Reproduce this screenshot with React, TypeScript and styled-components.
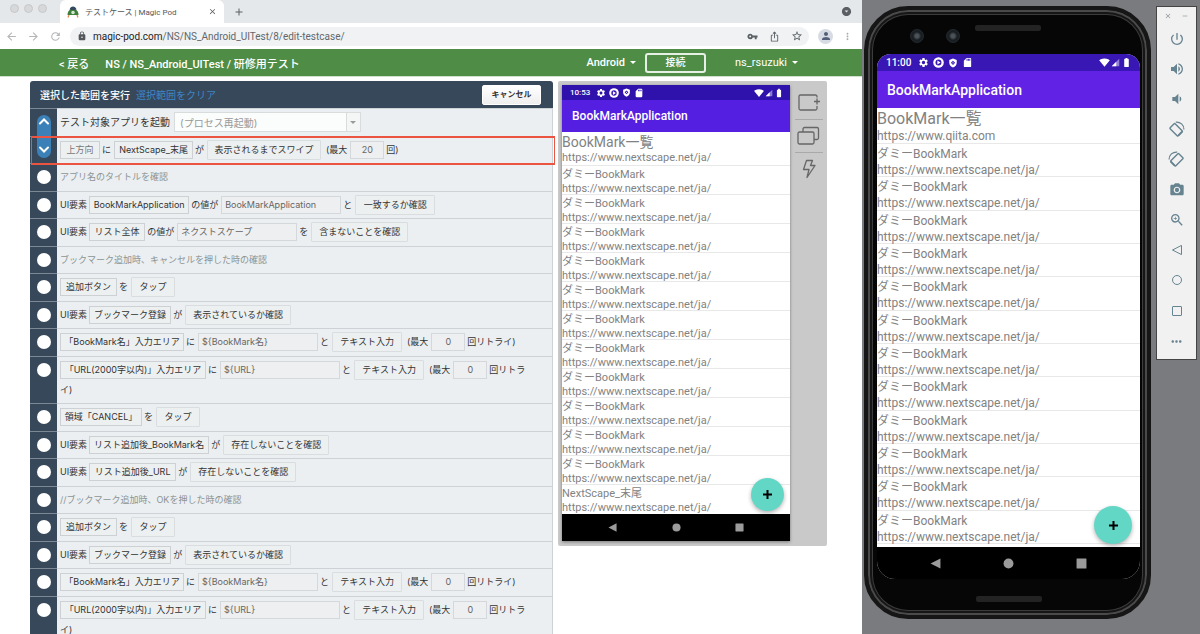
import React from "react";
import styled, { createGlobalStyle, css } from "styled-components";
import {
  MdAdd,
  MdArrowBack,
  MdArrowForward,
  MdArrowDropDownCircle,
  MdBatteryFull,
  MdClose,
  MdIosShare,
  MdLock,
  MdMoreHoriz,
  MdMoreVert,
  MdPerson,
  MdPhotoCamera,
  MdPowerSettingsNew,
  MdRefresh,
  MdRemove,
  MdSdCard,
  MdSettings,
  MdSignalWifi4Bar,
  MdStarBorder,
  MdVolumeDown,
  MdVolumeUp,
  MdVpnKey,
  MdZoomIn,
} from "react-icons/md";

const GlobalStyle = createGlobalStyle`
  *, *::before, *::after { box-sizing: border-box; }
  body {
    margin: 0;
    font-family: Inter, "Noto Sans CJK JP", sans-serif;
    color: #333;
    background: #fff;
  }
  button, input, select { font: inherit; color: inherit; margin: 0; }
  button { cursor: pointer; }
  svg { display: block; flex: none; }
`;

const Desktop = styled.div`
  display: flex;
  height: 100vh;
  overflow: hidden;
`;

const Browser = styled.div`
  flex: 1;
  min-width: 0;
  background: #fff;
`;

/* ---------- browser chrome ---------- */

const TabStrip = styled.div`
  display: flex;
  align-items: center;
  height: 23px;
  padding: 0 10px;
  background: #e4e8eb;
`;

const Lights = styled.div`
  display: flex;
  gap: 5px;
  align-self: flex-start;
  padding-top: 4px;
  width: 50px;
`;

const Light = styled.span`
  width: 9px;
  height: 9px;
  border-radius: 50%;
  background: #d7d8d9;
  border: 1px solid #c6c8c9;
`;

const Tab = styled.div`
  display: flex;
  align-items: center;
  gap: 6px;
  width: 164px;
  height: 23px;
  padding: 0 7px;
  border-radius: 6px 6px 0 0;
  background: #fff;
  font-size: 8px;
  color: #54585c;
`;

const TabTitle = styled.span`
  flex: 1;
  white-space: nowrap;
  font-family: Roboto, "Noto Sans CJK JP", sans-serif;
`;

const IconButton = styled.button<{ $color?: string }>`
  display: flex;
  align-items: center;
  justify-content: center;
  padding: 0;
  border: 0;
  background: none;
  color: ${(p) => p.$color ?? "#5b5f63"};
`;

const StripButton = styled(IconButton)`
  margin-left: 9px;
`;

const StripEnd = styled(IconButton)`
  margin-left: auto;
`;

const AddressRow = styled.div`
  display: flex;
  align-items: center;
  height: 26px;
  padding: 0 9px 0 5px;
  gap: 9px;
`;

const AddressBar = styled.div`
  flex: 1;
  display: flex;
  align-items: center;
  height: 19px;
  margin-left: -1px;
  padding: 0 6px 0 7px;
  border-radius: 10px;
  background: #f0f2f4;
`;

const Address = styled.span`
  flex: 1;
  margin-left: 6px;
  font-family: Roboto, sans-serif;
  font-size: 10px;
  color: #63676b;
  white-space: nowrap;
`;

const Host = styled.span`
  color: #1f2225;
`;

const AddressIcons = styled.div`
  display: flex;
  gap: 11px;
`;

const Avatar = styled(IconButton)`
  width: 15px;
  height: 15px;
  border-radius: 50%;
  background: #d7dbe3;
`;

/* ---------- application header ---------- */

const Header = styled.header`
  display: flex;
  align-items: center;
  height: 28px;
  padding: 0 64px 0 59px;
  border-bottom: 1px solid #cfe0cc;
  background: #4f8d46;
  color: #fff;
  font-family: Roboto, "Noto Sans CJK JP", sans-serif;
  font-size: 11px;
  font-weight: 500;
  white-space: nowrap;
`;

const HeaderLink = styled.a`
  margin-right: 16px;
  color: inherit;
  text-decoration: none;
`;

const Crumbs = styled.span`
  flex: 1;
`;

const HeaderMenu = styled.button<{ $light?: boolean }>`
  display: flex;
  align-items: center;
  gap: 5px;
  padding: 0;
  border: 0;
  background: none;
  font-weight: ${(p) => (p.$light ? 400 : 500)};

  &::after {
    content: "";
    border: 3px solid transparent;
    border-top-color: #fff;
    border-bottom: 0;
  }
`;

const ConnectButton = styled.button`
  width: 61px;
  height: 20px;
  margin: 0 29px 0 9px;
  padding: 0;
  border: 2px solid #e6f0e4;
  border-radius: 3px;
  background: none;
  font-size: 10px;
  line-height: 15px;
`;

/* ---------- test steps ---------- */

const Workspace = styled.main`
  display: flex;
  align-items: flex-start;
  gap: 5px;
  padding: 4px 35px 0 30px;
`;

const Steps = styled.section`
  flex: 1;
  min-width: 0;
  border-radius: 3px 3px 0 0;
  background: #37485a;
  font-size: 9px;
`;

const StepsHeader = styled.div`
  display: flex;
  align-items: center;
  gap: 6px;
  height: 27px;
  padding: 0 12px 0 10px;
  color: #fff;
  font-size: 10px;
  font-weight: 500;
`;

const ClearLink = styled.a`
  color: #3d86c6;
  text-decoration: none;
  font-weight: 400;
`;

const CancelButton = styled.button`
  width: 59px;
  height: 20px;
  margin-left: auto;
  padding: 0;
  border: 1px solid #fff;
  border-radius: 2px;
  background: linear-gradient(#fff, #eee);
  color: #333;
  font-size: 8px;
  font-weight: 700;
  line-height: 17px;
`;

const StepList = styled.ul`
  position: relative;
  margin: 0;
  padding: 0;
  list-style: none;
`;

const StepRow = styled.li<{ $framed?: boolean }>`
  display: flex;
  min-height: 28px;
  border-top: 1px solid #7c8894;

  &:nth-child(even) {
    min-height: 27px;
  }

  ${(p) =>
    p.$framed &&
    css`
      position: relative;
      &::after {
        content: "";
        position: absolute;
        inset: -1px -2px -2px 1px;
        border: 2px solid #ea5440;
        border-width: 2px 1px;
        pointer-events: none;
        z-index: 2;
      }
    `}
`;

const Gutter = styled.div`
  flex: none;
  width: 27px;
  padding: 6px 0 0 7px;
`;

const Marker = styled.button`
  display: block;
  width: 14px;
  height: 14px;
  padding: 0;
  border: 0;
  border-radius: 50%;
  background: #fff;
`;

const RangeHandle = styled.li`
  position: absolute;
  top: 7px;
  left: 7px;
  z-index: 1;
  display: flex;
  flex-direction: column;
  justify-content: space-between;
  align-items: center;
  width: 14px;
  height: 43px;
  padding: 3px 0 5px;
  border-radius: 7px;
  background: #3c80b8;
`;

const StepBody = styled.div<{ $muted?: boolean }>`
  flex: 1;
  min-width: 0;
  margin-top: -1px;
  padding: 2px 20px 3px 3px;
  border-top: 1px solid #ccd2d5;
  border-right: 1px solid #ccd2d5;
  background: #ebeff1;
  color: ${(p) => (p.$muted ? "#8b9494" : "#333")};
  line-height: 20px;
`;

const Word = styled.span<{ $first?: boolean; $large?: boolean }>`
  padding: ${(p) => (p.$first ? "0 2px 0 0" : "0 3px 0 2px")};
  font-size: ${(p) => (p.$large ? 10 : 9)}px;
  vertical-align: middle;
`;

const boxed = css<{ $w: number; $muted?: boolean }>`
  width: ${(p) => p.$w}px;
  padding: 0;
  border: 1px solid #cdd1d3;
  white-space: nowrap;
  vertical-align: middle;
  color: ${(p) => (p.$muted ? "#777" : "#333")};
`;

const Target = styled.button`
  ${boxed}
  height: 18px;
  background: #edf0f1;
  line-height: 14px;
`;

const Action = styled.button`
  ${boxed}
  height: 20px;
  margin: 0 3px 0 0;
  border-color: #d9dddf;
  border-radius: 1px;
  background: #edf0f1;
  line-height: 16px;
`;

const Field = styled.input<{ $w: number; $center?: boolean }>`
  ${boxed}
  height: 18px;
  padding: 0 3px;
  border-color: #d5d8da;
  background: #eeeff0;
  color: #666;
  text-align: ${(p) => (p.$center ? "center" : "left")};
`;

const SelectWrap = styled.span`
  position: relative;
  display: inline-block;
  margin-left: 2px;
  vertical-align: middle;

  &::after {
    content: "";
    position: absolute;
    top: 9px;
    right: 5px;
    border: 3px solid transparent;
    border-top-color: #999;
    border-bottom: 0;
    pointer-events: none;
  }
`;

const ModeSelect = styled.select`
  display: block;
  appearance: none;
  width: 187px;
  height: 20px;
  padding: 0 18px 0 5px;
  border: 1px solid #d9dcdd;
  border-radius: 0;
  background: linear-gradient(90deg, #fbfcfc 171px, #d9dcdd 171px, #d9dcdd 172px, #f4f6f6 172px);
  color: #999;
  font-size: 10px;
`;

/* ---------- device mirror ---------- */

const Mirror = styled.aside`
  flex: none;
  display: flex;
  width: 269px;
  padding: 4px 0 5px 4px;
  border-radius: 2px;
  background: #c9c9c9;
`;

const Tools = styled.div`
  flex: 1;
  display: flex;
  flex-direction: column;
  align-items: center;
  padding: 2px 4px 0;
`;

const Tool = styled.button`
  display: flex;
  justify-content: center;
  align-items: center;
  width: 28px;
  height: 33px;
  padding: 0;
  border: 0;
  border-bottom: 1px solid #a9a9a9;
  background: none;
  color: #666;

  &:last-child {
    border-bottom-color: transparent;
  }
`;

const Screen = styled.div<{ $large?: boolean }>`
  position: relative;
  display: flex;
  flex-direction: column;
  width: ${(p) => (p.$large ? 263 : 228)}px;
  border-radius: ${(p) => (p.$large ? "14px 14px 18px 18px" : "0")};
  overflow: hidden;
  background: #fff;
  font-family: Roboto, "Noto Sans CJK JP", sans-serif;
  ${(p) => !p.$large && "box-shadow: 0 1px 3px rgba(0, 0, 0, 0.4);"}
`;

const StatusBar = styled.div<{ $large?: boolean }>`
  display: flex;
  align-items: center;
  gap: ${(p) => (p.$large ? 4 : 3)}px;
  height: ${(p) => (p.$large ? 17 : 15)}px;
  padding: 0 ${(p) => (p.$large ? 8 : 6)}px 0 ${(p) => (p.$large ? 9 : 8)}px;
  background: ${(p) => (p.$large ? "#3917b4" : "#2e12ab")};
  color: #fff;
  font-size: ${(p) => (p.$large ? 10 : 8)}px;
  font-weight: 500;
`;

const Clock = styled.span`
  margin-right: 3px;
`;

const StatusRight = styled.span`
  display: flex;
  align-items: center;
  gap: 1px;
  margin-left: auto;
`;

const AppTitle = styled.div<{ $large?: boolean }>`
  display: flex;
  align-items: center;
  height: ${(p) => (p.$large ? 37 : 32)}px;
  padding: 0 10px;
  background: ${(p) => (p.$large ? "#6122e6" : "#541fe0")};
  color: #fff;
  font-size: ${(p) => (p.$large ? 14 : 12)}px;
  font-weight: 500;
`;

const Bookmarks = styled.ul<{ $large?: boolean }>`
  margin: 0;
  padding: 0 0 ${(p) => (p.$large ? 3 : 0)}px;
  list-style: none;
  color: #828282;
  font-size: ${(p) => (p.$large ? 12 : 11)}px;
  white-space: nowrap;
`;

const Bookmark = styled.li<{ $large?: boolean; $lead?: boolean }>`
  display: flex;
  flex-direction: column;
  padding-top: 2px;
  height: ${(p) => (p.$large ? (p.$lead ? 36 : 33) : p.$lead ? 34 : 29)}px;
  border-bottom: 1px solid #e8e8e8;
  line-height: ${(p) => (p.$large ? 16 : 14)}px;

  &:last-child {
    border-bottom-color: ${(p) => (p.$large ? "#e8e8e8" : "transparent")};
  }

  ${(p) =>
    p.$large &&
    css`
      &:nth-child(3n) {
        height: 34px;
      }
    `}
`;

const BookmarkName = styled.span<{ $lead?: boolean; $large?: boolean }>`
  ${(p) =>
    p.$lead &&
    css`
      font-size: ${p.$large ? 16 : 14}px;
      line-height: ${p.$large ? 18 : 17}px;
    `}
`;

const Fab = styled.button<{ $large?: boolean }>`
  position: absolute;
  right: ${(p) => (p.$large ? 8 : 6)}px;
  bottom: ${(p) => (p.$large ? 35 : 30)}px;
  display: flex;
  align-items: center;
  justify-content: center;
  width: ${(p) => (p.$large ? 38 : 33)}px;
  height: ${(p) => (p.$large ? 38 : 33)}px;
  padding: 0;
  border: 0;
  border-radius: 50%;
  background: #62d7c6;
  color: #000;
  box-shadow: 0 2px 4px rgba(0, 0, 0, 0.3);
`;

const NavBar = styled.div<{ $large?: boolean }>`
  position: relative;
  display: flex;
  justify-content: space-between;
  align-items: center;
  height: ${(p) => (p.$large ? 32 : 27)}px;
  padding: 0 ${(p) => (p.$large ? 53 : 46)}px;
  background: #000;
  color: #9b9b9b;
`;

/* ---------- emulator ---------- */

const Emulator = styled.aside`
  flex: none;
  display: flex;
  align-items: flex-start;
  gap: 5px;
  padding: 6px 3px 0 2px;
  background: #7a7b7f;
`;

const PhoneBody = styled.div`
  display: flex;
  flex-direction: column;
  align-items: center;
  width: 287px;
  height: 613px;
  padding: 0 0 13px 2px;
  border: 4px solid #161616;
  border-radius: 44px;
  background: #060606;
  box-shadow: inset 0 0 0 2px #4a4a4a, inset 0 0 0 4px #161616, inset 0 0 0 5px #3c3c3c;
`;

const PhoneTop = styled.div`
  display: flex;
  align-items: flex-start;
  width: 100%;
  height: 44px;
  padding: 15px 0 0 40px;
  gap: 22px;
`;

const Lens = styled.span`
  width: 14px;
  height: 14px;
  margin-top: 4px;
  border-radius: 50%;
  border: 1px solid #22282d;
  background: radial-gradient(circle, #4b5258 20%, #171c20 50%, #22282d);
`;

const Speaker = styled.span<{ $bottom?: boolean }>`
  flex: none;
  width: 66px;
  height: 6px;
  border-radius: 2px;
  background: #232323;
  margin: ${(p) => (p.$bottom ? "17px 0 0" : "0 0 0 -7px")};
`;

const Panel = styled.div`
  display: flex;
  flex-direction: column;
  align-items: center;
  width: 41px;
  height: 354px;
  border: 1px solid #444;
  background: #f1f1f1;
  color: #668390;
`;

const PanelTop = styled.div`
  display: flex;
  gap: 9px;
  height: 17px;
  align-items: center;
`;

const PanelButtons = styled.div`
  flex: 1;
  display: flex;
  flex-direction: column;
`;

const PanelButton = styled(IconButton)`
  width: 39px;
  height: 30px;
  color: inherit;

  &:nth-child(5n) {
    height: 31px;
  }
`;

/* ---------- drawings ---------- */

const PodLogo = () => (
  <svg width="12" height="12" viewBox="0 0 24 24">
    <path d="M1 18C1 10 6 6 12 6s11 4 11 12z" fill="#3f7f3b" />
    <path d="M5 7c1-4 4-6 7-6s6 2 7 6l-3 1H8z" fill="#314a5c" />
    <circle cx="12" cy="13" r="3.500" fill="#d6e8d2" />
    <path d="M4 18l-2 5M20 18l2 5" stroke="#e58a52" strokeWidth="2.500" />
  </svg>
);

const Chevron = ({ down }: { down?: boolean }) => (
  <svg width="10" height="7" viewBox="0 0 10 7" fill="none" stroke="#fff" strokeWidth="2" strokeLinecap="round">
    <path d={down ? "M1 1.5l4 4 4-4" : "M1 5.5l4-4 4 4"} />
  </svg>
);

const AddScreenIcon = () => (
  <svg width="24" height="20" viewBox="0 0 24 20" fill="none" stroke="currentColor" strokeWidth="1.3">
    <path d="M20 4.500V3.500a1.500 1.500 0 0 0-1.500-1.500H3.500A1.500 1.500 0 0 0 2 3.500v12A1.500 1.500 0 0 0 3.500 17h15a1.500 1.500 0 0 0 1.500-1.500V13M20 5.500v6M17 8.500h6" />
  </svg>
);

const StackIcon = () => (
  <svg width="24" height="22" viewBox="0 0 24 22" fill="none" stroke="currentColor" strokeWidth="1.300">
    <rect x="1" y="7" width="16" height="12" rx="1.500" />
    <path d="M6 7V4a1.500 1.500 0 0 1 1.500-1.500H20A1.500 1.500 0 0 1 21.500 4v9a1.500 1.500 0 0 1-1.500 1.500h-3" />
  </svg>
);

const BoltIcon = () => (
  <svg width="16" height="20" viewBox="0 0 16 20" fill="none" stroke="currentColor" strokeWidth="1.300" strokeLinejoin="round">
    <path d="M5.500 1.500h6l-2 5h4.500L6 18.500l2-8H2.500z" />
  </svg>
);

const PlayBadge = ({ size }: { size: number }) => (
  <svg width={size} height={size} viewBox="0 0 24 24">
    <circle cx="12" cy="12" r="11.500" fill="#fff" />
    <circle cx="12" cy="12" r="6.500" fill="#3917b4" />
    <path d="M9.500 7.500v9l7-4.500z" fill="#fff" />
  </svg>
);

const ShieldBadge = ({ size }: { size: number }) => (
  <svg width={size} height={size} viewBox="0 0 24 24">
    <path d="M12 1L3 4.500V11c0 5.500 3.800 10.500 9 12 5.200-1.500 9-6.500 9-12V4.500z" fill="#fff" />
    <path d="M12 6.500l5 5-5 5-5-5z" fill="#3917b4" />
    <circle cx="12" cy="11.500" r="1.500" fill="#fff" />
  </svg>
);

const SignalIcon = ({ size }: { size: number }) => (
  <svg width={size} height={size} viewBox="0 0 24 24">
    <path d="M2 22L22 2v20z" fill="#fff" opacity="0.450" />
    <path d="M2 22L14 10v12z" fill="#fff" />
  </svg>
);

const RotateIcon = ({ mirrored }: { mirrored?: boolean }) => (
  <svg width="17" height="17" viewBox="0 0 24 24" fill="none" stroke="currentColor">
    <g transform={mirrored ? "translate(24 0) scale(-1 1)" : undefined}>
      <rect x="3.500" y="7.500" width="16" height="10" rx="1" strokeWidth="2" transform="rotate(45 11.500 12.500)" />
      <path d="M13.500 19.500l5.500-5.500" strokeWidth="2.500" transform="translate(1 1)" />
      <path d="M11 1.500c6.500-.5 11.500 4 11.500 10.500" strokeWidth="1.700" />
    </g>
  </svg>
);

const BackShape = ({ size, outline }: { size: number; outline?: boolean }) => (
  <svg width={size} height={size} viewBox="0 0 10 10" fill={outline ? "none" : "currentColor"} stroke={outline ? "currentColor" : "none"}>
    <path d="M9.500 .4v9.200L.5 5z" />
  </svg>
);

const HomeShape = ({ size, outline }: { size: number; outline?: boolean }) => (
  <svg width={size} height={size} viewBox="0 0 10 10" fill={outline ? "none" : "currentColor"} stroke={outline ? "currentColor" : "none"}>
    <circle cx="5" cy="5" r="4.500" />
  </svg>
);

const RecentShape = ({ size, outline }: { size: number; outline?: boolean }) => (
  <svg width={size} height={size} viewBox="0 0 10 10" fill={outline ? "none" : "currentColor"} stroke={outline ? "currentColor" : "none"}>
    <rect x=".5" y=".5" width="9" height="9" rx=".5" />
  </svg>
);

/* ---------- step data ---------- */

type Part =
  | { kind: "text"; text: string; large?: boolean }
  | { kind: "target"; text: string; w: number; muted?: boolean }
  | { kind: "action"; text: string; w: number }
  | { kind: "field"; text: string; w: number; center?: boolean }
  | { kind: "mode" };

type Step = { parts: Part[]; comment?: boolean; framed?: boolean; inRange?: boolean };

const text = (value: string, large?: boolean): Part => ({ kind: "text", text: value, large });
const target = (value: string, w: number, muted?: boolean): Part => ({ kind: "target", text: value, w, muted });
const action = (value: string, w: number): Part => ({ kind: "action", text: value, w });
const field = (value: string, w = 120): Part => ({ kind: "field", text: value, w });
const count = (value: string): Part => ({ kind: "field", text: value, w: 34, center: true });
const comment = (value: string): Step => ({ comment: true, parts: [text(value)] });

const tapAdd: Step = { parts: [target("追加ボタン", 57), text("を"), action("タップ", 44)] };
const shown: Step = {
  parts: [text("UI要素"), target("ブックマーク登録", 82), text("が"), action("表示されているか確認", 106)],
};
const typeInto = (label: string, w: number, value: string): Step => ({
  parts: [
    target(label, w),
    text("に"),
    field(value),
    text("と"),
    action("テキスト入力", 70),
    text("(最大"),
    count("0"),
    text("回リトライ)"),
  ],
});
const typeName = typeInto("「BookMark名」入力エリア", 124, "${BookMark名}");
const typeUrl = typeInto("「URL(2000字以内)」入力エリア", 146, "${URL}");

const steps: Step[] = [
  { inRange: true, parts: [text("テスト対象アプリを起動", true), { kind: "mode" }] },
  {
    inRange: true,
    framed: true,
    parts: [
      target("上方向", 40, true),
      text("に"),
      target("NextScape_末尾", 79),
      text("が"),
      action("表示されるまでスワイプ", 114),
      text("(最大"),
      count("20"),
      text("回)"),
    ],
  },
  comment("アプリ名のタイトルを確認"),
  {
    parts: [
      text("UI要素"),
      target("BookMarkApplication", 100),
      text("の値が"),
      field("BookMarkApplication"),
      text("と"),
      action("一致するか確認", 80),
    ],
  },
  {
    parts: [
      text("UI要素"),
      target("リスト全体", 56),
      text("の値が"),
      field("ネクストスケープ"),
      text("を"),
      action("含まないことを確認", 97),
    ],
  },
  comment("ブックマーク追加時、キャンセルを押した時の確認"),
  tapAdd,
  shown,
  typeName,
  typeUrl,
  { parts: [target("領域「CANCEL」", 82), text("を"), action("タップ", 44)] },
  { parts: [text("UI要素"), target("リスト追加後_BookMark名", 120), text("が"), action("存在しないことを確認", 106)] },
  { parts: [text("UI要素"), target("リスト追加後_URL", 87), text("が"), action("存在しないことを確認", 106)] },
  comment("//ブックマーク追加時、OKを押した時の確認"),
  tapAdd,
  shown,
  typeName,
  typeUrl,
];

const StepPart = ({ part, first, label }: { part: Part; first: boolean; label: string }) => {
  switch (part.kind) {
    case "text":
      return (
        <Word $first={first} $large={part.large}>
          {part.text}
        </Word>
      );
    case "target":
      return (
        <Target $w={part.w} $muted={part.muted}>
          {part.text}
        </Target>
      );
    case "action":
      return <Action $w={part.w}>{part.text}</Action>;
    case "field":
      return <Field $w={part.w} $center={part.center} defaultValue={part.text} aria-label={label} />;
    case "mode":
      return (
        <SelectWrap>
          <ModeSelect aria-label="起動方法">
            <option>(プロセス再起動)</option>
          </ModeSelect>
        </SelectWrap>
      );
  }
};

/* ---------- phone screen ---------- */

const SITE = "https://www.nextscape.net/ja/";
const dummies = (n: number) => Array.from({ length: n }, () => ({ name: "ダミーBookMark", url: SITE }));

const mirrorItems = [{ name: "BookMark一覧", url: SITE }, ...dummies(11), { name: "NextScape_末尾", url: SITE }];
const emulatorItems = [{ name: "BookMark一覧", url: "https://www.qiita.com" }, ...dummies(12)];

const PhoneScreen = ({ time, items, large }: { time: string; items: { name: string; url: string }[]; large?: boolean }) => {
  const icon = large ? 11 : 10;
  const nav = large ? 11 : 9;
  return (
    <Screen $large={large}>
      <StatusBar $large={large}>
        <Clock>{time}</Clock>
        <MdSettings size={icon} />
        <PlayBadge size={icon} />
        <ShieldBadge size={icon - 1} />
        <MdSdCard size={icon} />
        <StatusRight>
          <MdSignalWifi4Bar size={icon} />
          <SignalIcon size={icon - 2} />
          <MdBatteryFull size={icon} />
        </StatusRight>
      </StatusBar>
      <AppTitle $large={large}>BookMarkApplication</AppTitle>
      <Bookmarks $large={large}>
        {items.map((item, i) => (
          <Bookmark key={i} $large={large} $lead={i === 0}>
            <BookmarkName $lead={i === 0} $large={large}>
              {item.name}
            </BookmarkName>
            <span>{item.url}</span>
          </Bookmark>
        ))}
      </Bookmarks>
      <NavBar $large={large}>
        <BackShape size={nav} />
        <HomeShape size={nav} />
        <RecentShape size={nav} />
      </NavBar>
      <Fab $large={large} aria-label="追加">
        <svg width="9" height="9" viewBox="0 0 9 9" stroke="currentColor" strokeWidth="2">
          <path d="M4.500 0v9M0 4.500h9" />
        </svg>
      </Fab>
    </Screen>
  );
};

export default function App() {
  return (
    <Desktop>
      <GlobalStyle />
      <Browser>
        <TabStrip>
          <Lights>
            <Light />
            <Light />
            <Light />
          </Lights>
          <Tab>
            <PodLogo />
            <TabTitle>テストケース | Magic Pod</TabTitle>
            <IconButton aria-label="タブを閉じる">
              <MdClose size={9} />
            </IconButton>
          </Tab>
          <StripButton aria-label="新しいタブ">
            <MdAdd size={12} />
          </StripButton>
          <StripEnd aria-label="タブを検索">
            <MdArrowDropDownCircle size={11} />
          </StripEnd>
        </TabStrip>
        <AddressRow>
          <IconButton $color="#b4b6b8" aria-label="戻る">
            <MdArrowBack size={13} />
          </IconButton>
          <IconButton $color="#b4b6b8" aria-label="進む">
            <MdArrowForward size={13} />
          </IconButton>
          <IconButton $color="#b4b6b8" aria-label="再読み込み">
            <MdRefresh size={13} />
          </IconButton>
          <AddressBar>
            <MdLock size={10} color="#54585c" />
            <Address>
              <Host>magic-pod.com</Host>/NS/NS_Android_UITest/8/edit-testcase/
            </Address>
            <AddressIcons>
              <IconButton aria-label="パスワード">
                <MdVpnKey size={11} />
              </IconButton>
              <IconButton aria-label="共有">
                <MdIosShare size={11} />
              </IconButton>
              <IconButton aria-label="ブックマーク">
                <MdStarBorder size={12} />
              </IconButton>
            </AddressIcons>
          </AddressBar>
          <Avatar $color="#54607a" aria-label="プロフィール">
            <MdPerson size={12} />
          </Avatar>
          <IconButton $color="#a9abad" aria-label="メニュー">
            <MdMoreVert size={11} />
          </IconButton>
        </AddressRow>
        <Header>
          <HeaderLink href="#back">&lt; 戻る</HeaderLink>
          <Crumbs>NS / NS_Android_UITest / 研修用テスト</Crumbs>
          <HeaderMenu>Android</HeaderMenu>
          <ConnectButton>接続</ConnectButton>
          <HeaderMenu $light>ns_rsuzuki</HeaderMenu>
        </Header>
        <Workspace>
          <Steps>
            <StepsHeader>
              <span>選択した範囲を実行</span>
              <ClearLink href="#clear">選択範囲をクリア</ClearLink>
              <CancelButton>キャンセル</CancelButton>
            </StepsHeader>
            <StepList>
              {steps.map((step, i) => (
                <StepRow key={i} $framed={step.framed}>
                  <Gutter>{!step.inRange && <Marker aria-label={`ステップ ${i + 1}`} />}</Gutter>
                  <StepBody $muted={step.comment}>
                    {step.parts.map((part, j) => (
                      <StepPart key={j} part={part} first={j === 0} label={`ステップ ${i + 1} の値`} />
                    ))}
                  </StepBody>
                </StepRow>
              ))}
              <RangeHandle>
                <Chevron />
                <Chevron down />
              </RangeHandle>
            </StepList>
          </Steps>
          <Mirror>
            <PhoneScreen time="10:53" items={mirrorItems} />
            <Tools>
              <Tool aria-label="画面を追加">
                <AddScreenIcon />
              </Tool>
              <Tool aria-label="画面一覧">
                <StackIcon />
              </Tool>
              <Tool aria-label="実行">
                <BoltIcon />
              </Tool>
            </Tools>
          </Mirror>
        </Workspace>
      </Browser>
      <Emulator>
        <PhoneBody>
          <PhoneTop>
            <Lens />
            <Lens />
            <Speaker />
          </PhoneTop>
          <PhoneScreen time="11:00" items={emulatorItems} large />
          <Speaker $bottom />
        </PhoneBody>
        <Panel>
          <PanelTop>
            <IconButton $color="#8a979e" aria-label="閉じる">
              <MdClose size={8} />
            </IconButton>
            <IconButton $color="#8a979e" aria-label="最小化">
              <MdRemove size={8} />
            </IconButton>
          </PanelTop>
          <PanelButtons>
            <PanelButton aria-label="電源">
              <MdPowerSettingsNew size={16} />
            </PanelButton>
            <PanelButton aria-label="音量を上げる">
              <MdVolumeUp size={16} />
            </PanelButton>
            <PanelButton aria-label="音量を下げる">
              <MdVolumeDown size={16} />
            </PanelButton>
            <PanelButton aria-label="左に回転">
              <RotateIcon />
            </PanelButton>
            <PanelButton aria-label="右に回転">
              <RotateIcon mirrored />
            </PanelButton>
            <PanelButton aria-label="スクリーンショット">
              <MdPhotoCamera size={16} />
            </PanelButton>
            <PanelButton aria-label="拡大">
              <MdZoomIn size={16} />
            </PanelButton>
            <PanelButton aria-label="バック">
              <BackShape size={10} outline />
            </PanelButton>
            <PanelButton aria-label="ホーム">
              <HomeShape size={10} outline />
            </PanelButton>
            <PanelButton aria-label="履歴">
              <RecentShape size={10} outline />
            </PanelButton>
            <PanelButton aria-label="その他">
              <MdMoreHoriz size={15} />
            </PanelButton>
          </PanelButtons>
        </Panel>
      </Emulator>
    </Desktop>
  );
}
